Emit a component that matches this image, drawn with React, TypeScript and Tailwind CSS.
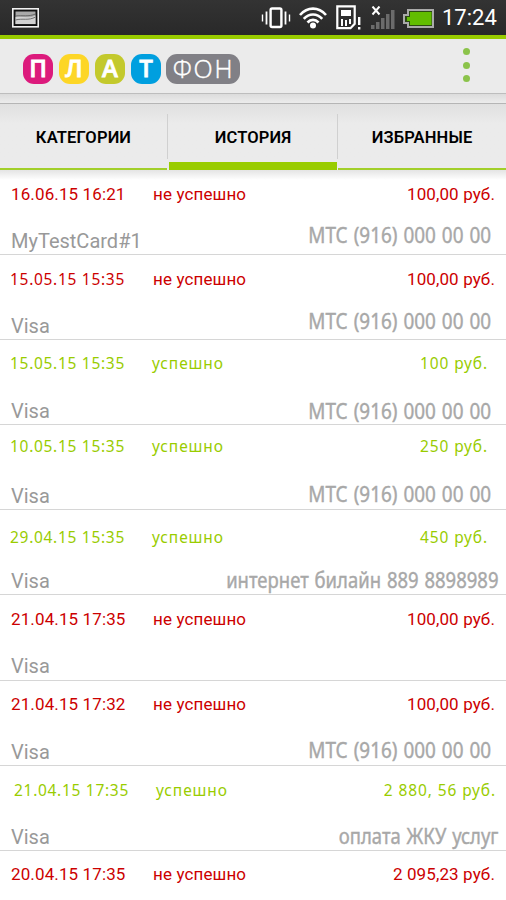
/** Payment history screen: status bar, brand header, tabs and the list of operations. */

import clsx from "clsx";

interface Operation {
  id: number;
  date: string;
  ok?: boolean;
  amount: string;
  card?: string;
  target?: string;
  topClass: string;
  dateClass?: string;
  targetClass?: string;
}

const MTS = "МТС (916) 000 00 00";

const OPERATIONS: Operation[] = [
  { id: 1, date: "16.06.15 16:21", amount: "100,00 руб.", card: "MyTestCard#1", target: MTS, topClass: "pt-[13px]", targetClass: "pt-[7px] mr-[15px] scale-x-90" },
  { id: 2, date: "15.05.15 15:35", amount: "100,00 руб.", card: "Visa", target: MTS, topClass: "pt-[13px]", dateClass: "-ml-px mr-px font-['Noto_Sans'] text-[15.5px] tracking-[0.7px]", targetClass: "pt-[8px] mr-[15px] scale-x-90" },
  { id: 3, date: "15.05.15 15:35", ok: true, amount: "100 руб.", card: "Visa", target: MTS, topClass: "pt-[12px] pl-[10px] pr-[18px]", targetClass: "pt-[13px] mr-[15px] scale-x-90" },
  { id: 4, date: "10.05.15 15:35", ok: true, amount: "250 руб.", card: "Visa", target: MTS, topClass: "pt-[10px] pl-[10px] pr-[18px]", targetClass: "pt-[11px] mr-[15px] scale-x-90" },
  { id: 5, date: "29.04.15 15:35", ok: true, amount: "450 руб.", card: "Visa", target: "интернет билайн 889 8898989", topClass: "pt-[16px] pl-[10px] pr-[18px]", targetClass: "pt-[12px] mr-[8px] scale-x-88" },
  { id: 6, date: "21.04.15 17:35", amount: "100,00 руб.", card: "Visa", topClass: "pt-[13px]" },
  { id: 7, date: "21.04.15 17:32", amount: "100,00 руб.", card: "Visa", target: MTS, topClass: "pt-[12px]", targetClass: "pt-[11px] mr-[15px] scale-x-90" },
  { id: 8, date: "21.04.15 17:35", ok: true, amount: "2 880, 56 руб.", card: "Visa", target: "оплата ЖКУ услуг", topClass: "pt-[13px] pl-[14px] pr-[10px]", targetClass: "pt-[12px] mr-[8px] scale-x-88" },
  { id: 9, date: "20.04.15 17:35", amount: "2 095,23 руб.", topClass: "pt-[12px]" },
];

const LOGO = [
  { letter: "П", bg: "bg-[#dc1a7c]" },
  { letter: "Л", bg: "bg-[#fdd626]" },
  { letter: "А", bg: "bg-[#c3c92c]" },
  { letter: "Т", bg: "bg-[#009fdf]" },
];

function StatusBar() {
  return (
    <div className="flex h-[35px] shrink-0 items-center bg-linear-to-b from-[#333] to-[#292929] pr-[9px] pl-[12px]">
      <svg width="27" height="20" viewBox="0 0 27 20" className="mt-px">
        <rect x="0.8" y="0.8" width="25.4" height="18" fill="#111" stroke="#f2f2f2" strokeWidth="1.6" />
        <rect x="3.5" y="3.5" width="20" height="12.6" fill="#a9a9a9" />
        <path d="M3.5 9c7-1 13 2 20-1.5v8.6h-20z" fill="#d2d2d2" />
        <path d="M3.5 8c7-1 13 1 20-2M3.5 12c7-2 13 1 20-3" stroke="#555" strokeWidth="0.8" fill="none" />
      </svg>
      <div className="ml-auto flex items-center">
        <svg width="30" height="24" viewBox="0 0 30 24" fill="none" stroke="#fff">
          <rect x="9.6" y="2.5" width="10.8" height="18.5" rx="1.5" strokeWidth="2.4" />
          <path d="M5.5 5.5v13M24.5 5.5v13" strokeWidth="1.8" />
          <path d="M1.5 8.5v7M28.5 8.5v7" strokeWidth="1.4" />
        </svg>
        <svg width="28" height="24" viewBox="0 0 28 24" fill="none" stroke="#fff" strokeWidth="2.6" className="ml-[8px]">
          <path d="M1 9C8.5 0.5 19.5 0.5 27 9" />
          <path d="M4.8 12.8c5.2-5.8 13.2-5.8 18.4 0" />
          <path d="M8.5 16.5c3.2-3.5 7.8-3.5 11 0" />
          <circle cx="14" cy="19.5" r="3" fill="#fff" stroke="none" />
        </svg>
        <svg width="25" height="26" viewBox="0 0 25 26" className="ml-[9px]">
          <path d="M1.3 1.3h17.4v17.5l-4.2 4.4H1.3z" fill="none" stroke="#fff" strokeWidth="2.2" />
          <path d="M5 5h10v6H5zM5 14h2v7H5zM9 15h2v6H9zM13 14h2v5h-2z" fill="#fff" />
          <path d="M22 12h2.4v8H22zM22 22h2.4v2.5H22z" fill="#fff" />
        </svg>
        <svg width="24" height="24" viewBox="0 0 24 24" className="ml-[10px]">
          <path d="M1.5 0.5l7 8M8.5 0.5l-7 8" stroke="#fff" strokeWidth="2" />
          <path d="M0 19h3.5v4H0zM5 16h3.5v7H5zM10 12h3.5v11H10zM15 8h3.5v15H15zM20 4h3.5v19H20z" fill="#6b6b6b" />
        </svg>
        <svg width="32" height="20" viewBox="0 0 32 20" className="mt-[2px] ml-[8px]">
          <path d="M5 1h25v17H5v-4H1V6h4z" fill="#2c4a12" stroke="#aaa" strokeWidth="2" />
          <path d="M7 3h21.5v13H7v-4H4V8h3z" fill="#62bd00" />
        </svg>
        <span className="ml-[7px] w-[55px] text-[22px] leading-[34px] text-white">17:24</span>
      </div>
    </div>
  );
}

function Header() {
  return (
    <header className="flex h-[58px] shrink-0 items-center justify-between border-t-4 border-[#99cc00] bg-[#ebebeb] pr-[36px] pl-[23px]">
      <div className="mt-[6px] flex gap-[6px] text-white">
        {LOGO.map(({ letter, bg }) => (
          <span
            key={letter}
            className={clsx("flex size-[30px] items-center justify-center rounded-[11px] font-['Open_Sans'] text-[24px] leading-[28px] font-semibold [-webkit-text-stroke:0.8px_white]", bg)}
          >
            <span className="-mt-[2px]">{letter}</span>
          </span>
        ))}
        <span className="-ml-px flex h-[30px] w-[74px] items-center justify-center rounded-[11px] bg-[#818086] pl-px font-['Open_Sans'] text-[25px] leading-[28px] font-light tracking-[1.8px] [-webkit-text-stroke:0.4px_white]">
          <span className="-mt-[2px]">ФОН</span>
        </span>
      </div>
      <div className="mt-[-2px] flex flex-col gap-[6.5px]">
        <i className="size-[7px] rounded-full bg-[#8bc34a]" />
        <i className="size-[7px] rounded-full bg-[#8bc34a]" />
        <i className="size-[7px] rounded-full bg-[#8bc34a]" />
      </div>
    </header>
  );
}

function Tabs() {
  return (
    <nav className="flex h-[67px] shrink-0 border-t border-[#b5b5b5] bg-linear-to-b from-[#e0e0e0] to-[#ebebeb] to-30% text-[16.5px] font-semibold tracking-[0.15px] text-black">
      <div className="flex w-[167px] items-center justify-center border-b-2 border-[#a2cf2a] pt-[4px]">КАТЕГОРИИ</div>
      <div className="mt-[10px] mr-px h-[45px] w-px bg-[#d0d0d0]" />
      <div className="flex w-[168px] items-center justify-center border-b-8 border-[#99cc00] pt-[10px]">ИСТОРИЯ</div>
      <div className="mt-[10px] h-[45px] w-px bg-[#d0d0d0]" />
      <div className="flex flex-1 items-center justify-center border-b-2 border-[#a2cf2a] pt-[4px]">ИЗБРАННЫЕ</div>
    </nav>
  );
}

function OperationRow({ op }: { op: Operation }) {
  return (
    <li className="h-[85.1px] shrink-0 border-b-[1.5px] border-[#d6d6d6]">
      <div
        className={clsx(
          "flex h-[45px] leading-[22px]",
          op.ok
            ? "font-['Noto_Sans'] text-[15.5px] tracking-[0.7px] text-[#99cc00]"
            : "pr-[11px] pl-[11px] text-[17px] tracking-[0.12px] text-[#cc0000]",
          op.topClass,
        )}
      >
        <span className={clsx("w-[142px]", op.dateClass)}>{op.date}</span>
        <span className={clsx(op.ok && "tracking-[0.9px]")}>{op.ok ? "успешно" : "не успешно"}</span>
        <span className={clsx("ml-auto", op.ok && "tracking-[0.9px]")}>{op.amount}</span>
      </div>
      <div className="flex h-[38px] justify-between pl-[11px]">
        <span className="pt-[13px] text-[20px] leading-[26px] text-[#999]">{op.card}</span>
        {op.target && (
          <span
            className={clsx(
              "origin-right font-['Noto_Sans'] text-[21px] leading-[26px] [word-spacing:1.2px] whitespace-nowrap text-[#a8a8a8] [-webkit-text-stroke:0.4px_#a8a8a8]",
              op.targetClass,
            )}
          >
            {op.target}
          </span>
        )}
      </div>
    </li>
  );
}

export default function App() {
  return (
    <div className="flex h-[900px] w-[506px] flex-col overflow-hidden bg-white font-['Roboto',sans-serif]">
      <StatusBar />
      <Header />
      <div className="h-[10px] shrink-0 border-t border-[#bdbdbd] bg-linear-to-b from-[#dcdcdc] to-[#ececec]" />
      <Tabs />
      <ul className="bg-linear-to-b from-[#e4e4e4] to-white to-[10px]">
        {OPERATIONS.map((op) => (
          <OperationRow key={op.id} op={op} />
        ))}
      </ul>
    </div>
  );
}
